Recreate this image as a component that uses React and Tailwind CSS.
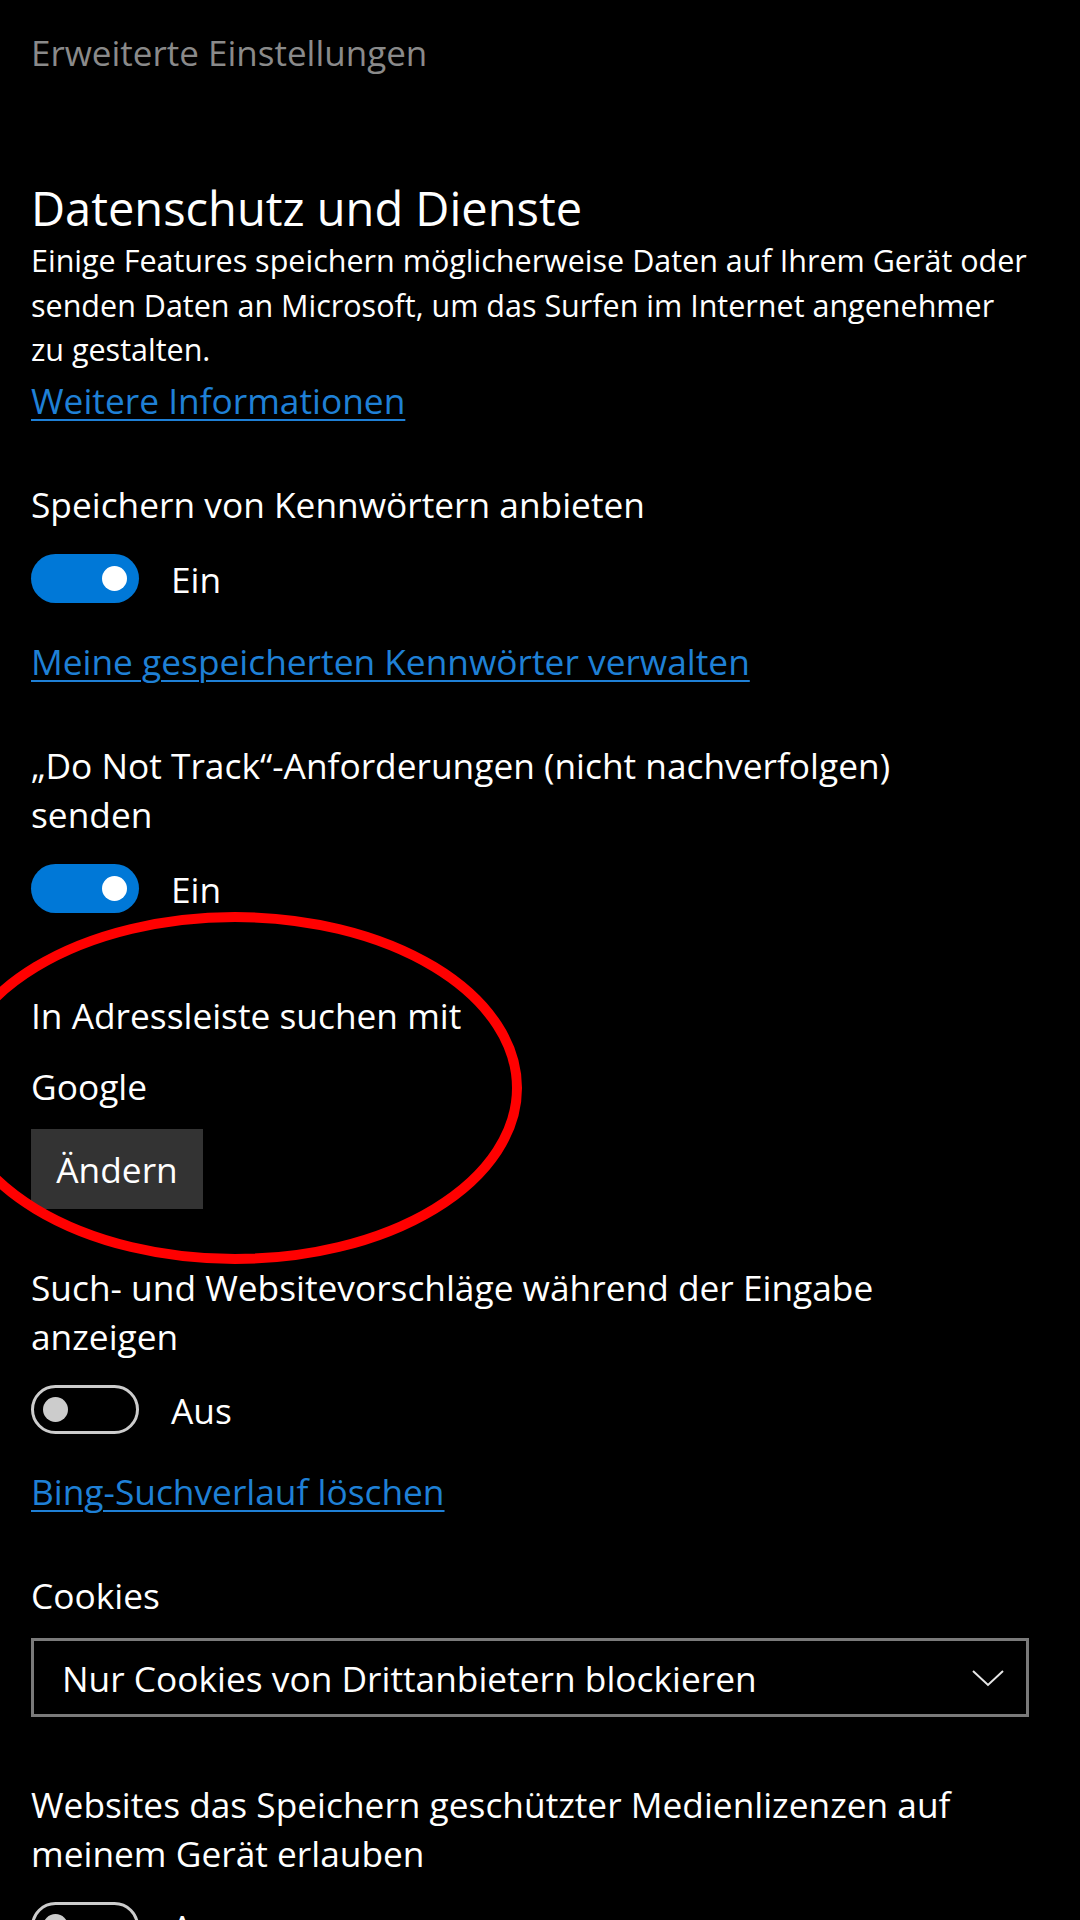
import React from "react";

const font = { fontFamily: '"Open Sans", "Noto Sans", sans-serif' };

function Toggle({ on }) {
  if (on) {
    return (
      <div className="w-[108px] h-[49px] rounded-full bg-[#0078d7] flex items-center justify-end pr-[12px] shrink-0">
        <div className="w-[25px] h-[25px] rounded-full bg-white" />
      </div>
    );
  }
  return (
    <div className="w-[108px] h-[49px] rounded-full border-[3px] border-[#cccccc] flex items-center pl-[9px] shrink-0">
      <div className="w-[25px] h-[25px] rounded-full bg-[#cccccc]" />
    </div>
  );
}

function ToggleRow({ on, className = "" }) {
  return (
    <div className={`flex items-center gap-[32px] ${className}`}>
      <Toggle on={on} />
      <span className="text-[35.3px] leading-[48px] text-white">{on ? "Ein" : "Aus"}</span>
    </div>
  );
}

function Label({ lines, className = "" }) {
  return (
    <div className={`text-[35.3px] leading-[49px] text-white ${className}`}>
      {lines.map((l) => (
        <div key={l} className="whitespace-nowrap">{l}</div>
      ))}
    </div>
  );
}

function LinkText({ children, className = "" }) {
  return (
    <div className={`text-[35.3px] leading-[48px] ${className}`}>
      <a href="#" className="text-[#1f80d6] underline decoration-[2px] underline-offset-[5px]">
        {children}
      </a>
    </div>
  );
}

export default function App() {
  return (
    <div className="relative w-[1080px] h-[1920px] bg-black overflow-hidden" style={font}>
      <div className="pl-[31px] pt-[29px] w-[1029px] flex flex-col">
        <div className="text-[35px] leading-[48px] text-[#8a8a8a]">Erweiterte Einstellungen</div>

        <h1 className="mt-[101px] text-[47px] leading-[60px] text-white">Datenschutz und Dienste</h1>
        <div className="text-[30.5px] leading-[44.5px] text-white">
          <div className="whitespace-nowrap">Einige Features speichern möglicherweise Daten auf Ihrem Gerät oder</div>
          <div className="whitespace-nowrap">senden Daten an Microsoft, um das Surfen im Internet angenehmer</div>
          <div className="whitespace-nowrap">zu gestalten.</div>
        </div>
        <LinkText className="mt-[4.5px]">Weitere Informationen</LinkText>

        <Label className="mt-[56px]" lines={["Speichern von Kennwörtern anbieten"]} />
        <ToggleRow on className="mt-[25px]" />
        <LinkText className="mt-[34px]">Meine gespeicherten Kennwörter verwalten</LinkText>

        <Label
          className="mt-[56px]"
          lines={["„Do Not Track“-Anforderungen (nicht nachverfolgen)", "senden"]}
        />
        <ToggleRow on className="mt-[25px]" />

        <Label className="mt-[78px]" lines={["In Adressleiste suchen mit"]} />
        <Label className="mt-[22px]" lines={["Google"]} />
        <div className="mt-[18px]">
          <button className="h-[80px] w-[172px] bg-[#333333] text-white text-[35.3px] leading-[48px]">
            Ändern
          </button>
        </div>

        <Label
          className="mt-[54px]"
          lines={["Such- und Websitevorschläge während der Eingabe", "anzeigen"]}
        />
        <ToggleRow on={false} className="mt-[24px]" />
        <LinkText className="mt-[33px]">Bing-Suchverlauf löschen</LinkText>

        <Label className="mt-[56px]" lines={["Cookies"]} />
        <div className="mt-[18px] h-[79px] w-[998px] border-[3px] border-[#7a7a7a] flex items-center justify-between pl-[28px] pr-[22px]">
          <span className="text-[35.3px] leading-[48px] text-white">Nur Cookies von Drittanbietern blockieren</span>
          <svg width="32" height="18" viewBox="0 0 32 18" fill="none">
            <path d="M1 2 L16 16 L31 2" stroke="#e6e6e6" strokeWidth="2" />
          </svg>
        </div>

        <Label
          className="mt-[63px]"
          lines={["Websites das Speichern geschützter Medienlizenzen auf", "meinem Gerät erlauben"]}
        />
        <ToggleRow on={false} className="mt-[24px]" />
      </div>

      <svg className="absolute left-0 top-0 pointer-events-none" width="1080" height="1920">
        <ellipse cx="235" cy="1088" rx="282" ry="171" fill="none" stroke="#ff0000" strokeWidth="10" />
      </svg>
    </div>
  );
}
